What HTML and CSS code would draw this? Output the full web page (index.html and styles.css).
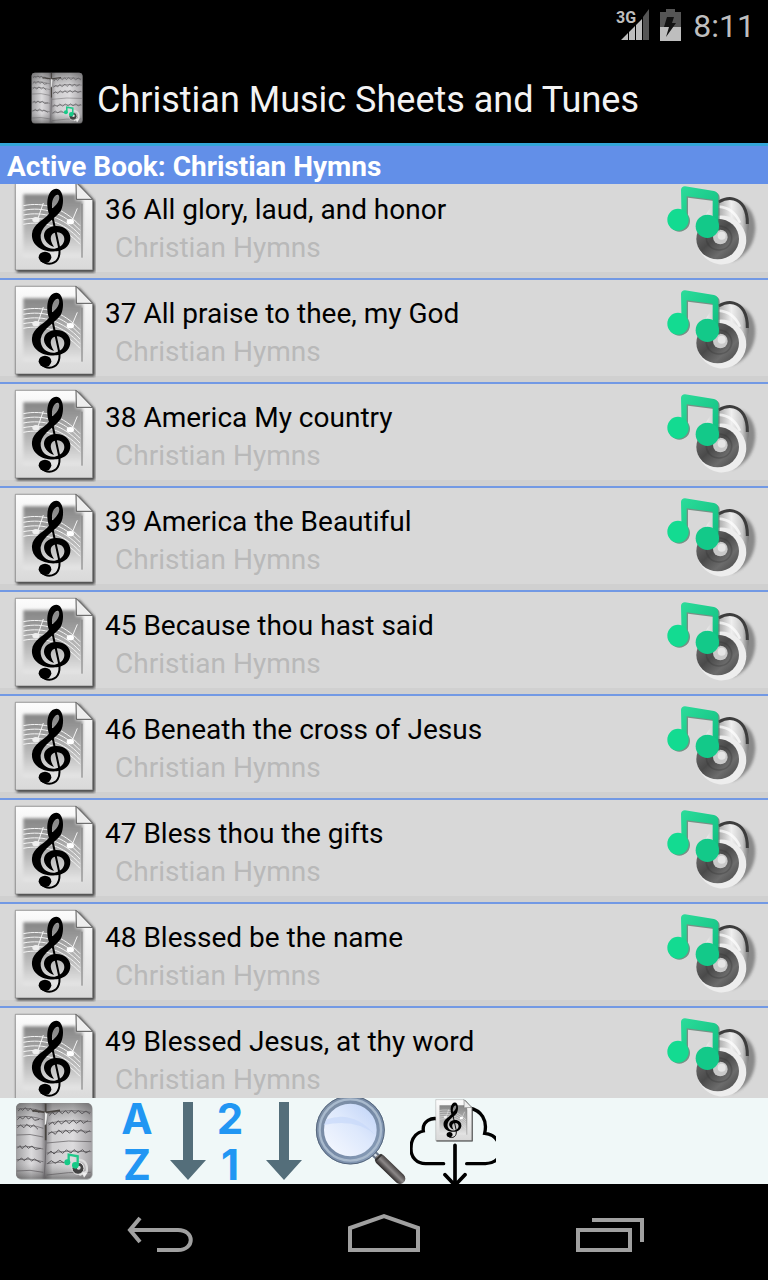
FILE: index.html
```
<!DOCTYPE html>
<html lang="en">
<head>
<meta charset="utf-8">
<meta name="viewport" content="width=device-width, initial-scale=1">
<title>Christian Music Sheets and Tunes</title>
<link rel="stylesheet" href="styles.css">
</head>
<body>
<svg class="defs" aria-hidden="true">
  <defs>
    <linearGradient id="paper" x1="0" y1="0" x2="0" y2="1"><stop offset="0" stop-color="#fcfcfc"/><stop offset="1" stop-color="#d9d9d9"/></linearGradient>
    <linearGradient id="shade" x1="0" y1="0" x2="0" y2="1"><stop offset="0" stop-color="#858585"/><stop offset=".6" stop-color="#b9b9b9"/><stop offset="1" stop-color="#e6e6e6"/></linearGradient>
    <linearGradient id="green" x1="0" y1="0" x2="1" y2="1"><stop offset="0" stop-color="#2bdc9a"/><stop offset="1" stop-color="#10bd80"/></linearGradient>
    <linearGradient id="cabinet" x1="0" y1="0" x2="1" y2="0"><stop offset="0" stop-color="#eee"/><stop offset=".35" stop-color="#b4b4b4"/><stop offset=".6" stop-color="#efefef"/><stop offset=".85" stop-color="#c9c9c9"/><stop offset="1" stop-color="#777"/></linearGradient>
    <linearGradient id="cone" x1="0" y1="0" x2="1" y2="1"><stop offset="0" stop-color="#777"/><stop offset=".45" stop-color="#4a4a4a"/><stop offset=".7" stop-color="#6c6c6c"/><stop offset="1" stop-color="#444"/></linearGradient>
    <linearGradient id="pages" x1="0" y1="0" x2="1" y2="0"><stop offset="0" stop-color="#a09fa1"/><stop offset=".2" stop-color="#dcdbdd"/><stop offset=".33" stop-color="#bab8bb"/><stop offset=".38" stop-color="#8a888b"/><stop offset=".48" stop-color="#cecdcf"/><stop offset=".75" stop-color="#dddcde"/><stop offset="1" stop-color="#a5a3a6"/></linearGradient>
    <linearGradient id="vignette" x1="0" y1="0" x2="0" y2="1"><stop offset="0" stop-color="#333" stop-opacity=".45"/><stop offset=".3" stop-color="#777" stop-opacity="0"/><stop offset=".8" stop-color="#777" stop-opacity="0"/><stop offset="1" stop-color="#333" stop-opacity=".5"/></linearGradient>
    <linearGradient id="lens" x1="1" y1="0" x2="0" y2="1"><stop offset="0" stop-color="#b9cef6"/><stop offset=".45" stop-color="#dde8fc"/><stop offset="1" stop-color="#fbfcff"/></linearGradient>
    <linearGradient id="rim" x1="0" y1="0" x2="1" y2="1"><stop offset="0" stop-color="#8293a8"/><stop offset=".5" stop-color="#7488a4"/><stop offset="1" stop-color="#8ba0bb"/></linearGradient>
    <linearGradient id="handle" gradientUnits="userSpaceOnUse" x1="580" y1="222" x2="556" y2="246"><stop offset="0" stop-color="#3c3838"/><stop offset=".5" stop-color="#8c8888"/><stop offset="1" stop-color="#2c2828"/></linearGradient>
    <filter id="soft" x="-20%" y="-20%" width="140%" height="140%"><feGaussianBlur stdDeviation="4"/></filter>
  </defs>
  <symbol id="sheet" viewBox="39 33 249 288">
    <path d="M50 52H238L284 102V316H50z" fill="#333" filter="url(#soft)"/>
    <path d="M46 46H228L278 97V309H46z" fill="url(#paper)" stroke="#777" stroke-width="2"/>
    <path d="M70 82H228V100H248V270H70z" fill="url(#shade)" filter="url(#soft)"/>
    <g fill="none" stroke="#f4f4f4" stroke-width="3">
      <path d="M70 116C130 104 190 122 240 176"/><path d="M70 130C130 118 190 136 240 190"/><path d="M70 144C130 132 190 150 240 204"/><path d="M70 158C130 146 190 164 240 218"/><path d="M70 172C130 160 190 178 240 232"/>
      <path d="M114 154L130 108M216 162L232 124"/>
    </g>
    <ellipse cx="108" cy="158" rx="11" ry="8" fill="#eee"/><ellipse cx="211" cy="164" rx="11" ry="8" fill="#fff"/>
    <path d="M246 110V272" stroke="#777" stroke-width="3"/>
    <path d="M228 46L229 97H278z" fill="#eee" stroke="#555" stroke-width="3"/>
    <path fill-rule="evenodd" d="M147 140C136 108 143 66 169 65C192 66 194 112 182 132C164 158 128 170 122 204C120 232 142 247 164 245C202 239 201 197 172 196C150 197 146 216 162 240C121 225 122 180 167 177C223 175 228 246 170 253C123 257 93 232 96 200C98 172 130 160 147 140ZM157 124C152 101 164 82 174 83C182 88 178 108 157 124Z"/>
    <path d="M153 130L177 240C183 272 170 289 148 290Q134 290 124 280" fill="none" stroke="#000" stroke-width="6"/>
    <ellipse cx="135" cy="271" rx="19" ry="17"/>
  </symbol>
  <symbol id="tune" viewBox="48 51 276 249">
    <path d="M240 110C290 95 325 150 314 205C308 245 280 276 245 286z" fill="#555" opacity=".6" filter="url(#soft)"/>
    <path d="M166 150C190 95 258 80 284 120C300 150 298 180 291 210L268 272L170 190z" fill="url(#cabinet)"/>
    <path d="M206 108C240 88 268 100 281 122Q293 143 292 174" fill="none" stroke="#3d3d3d" stroke-width="9"/>
    <path d="M206 122Q250 125 270 170" fill="none" stroke="#fff" stroke-width="8" opacity=".7"/>
    <ellipse cx="215" cy="222" rx="74" ry="73" fill="#ededed" transform="rotate(30 215 222)"/>
    <ellipse cx="203" cy="219" rx="64" ry="61" fill="url(#cone)"/>
    <ellipse cx="207" cy="216" rx="38" ry="36" fill="none" stroke="#333" stroke-width="5" opacity=".3"/>
    <circle cx="211" cy="213" r="22" fill="#c9c9c9"/><circle cx="215" cy="209" r="12" fill="#e5e5e5"/>
    <g transform="translate(4 4)" fill="#416c5a" opacity=".65"><path d="M93 72Q94 61 105 61L192 75Q205 78 205 92V190H188V101L110 91V166H95z"/><ellipse cx="84" cy="161" rx="32" ry="32"/></g>
    <path d="M93 72Q94 61 105 61L192 75Q205 78 205 92V190H188V101L110 91V166H95z" fill="url(#green)"/>
    <ellipse cx="84" cy="161" rx="32" ry="33" fill="#13db91"/><ellipse cx="172" cy="181" rx="35" ry="35" fill="#13c989"/>
  </symbol>
  <symbol id="book" viewBox="45 39 234 234">
    <rect x="48" y="43" width="230" height="229" rx="16" fill="#777" opacity=".6"/>
    <rect x="48" y="42" width="228" height="227" rx="15" fill="url(#pages)"/>
    <rect x="48" y="42" width="228" height="227" rx="15" fill="url(#vignette)"/>
    <g fill="none" stroke="#5a585b" stroke-width="2">
      <path d="M52 60Q90 54 130 68M52 84Q90 78 130 92M50 110Q90 104 130 118M50 138Q90 132 130 144M50 174Q90 168 130 180M50 212Q90 206 130 218M50 246Q90 240 130 250"/>
      <path d="M144 74Q205 58 272 70M144 103Q205 90 274 98M144 132Q205 120 274 128M140 162Q205 152 274 158M140 192Q205 183 274 188M140 224Q170 218 200 220M140 258Q205 248 272 250"/>
    </g>
    <path d="M54 66L62 59L68 64L76 56L84 65L91 58L100 68L107 61L118 72M52 92L60 84L68 90L77 81L85 90L95 84L104 94L118 91M52 116L61 108L72 116L80 106L92 115L101 108L114 121M52 178L60 170L66 179L77 169L85 178L96 171L107 181L122 178M52 216L65 207L72 215L84 206L95 216L103 210L122 221M148 80L156 70L165 77L176 66L187 74L196 65L205 73L214 64L225 73L235 65L246 74L258 66L270 75M146 108L158 99L164 107L175 95L184 105L198 94L207 104L220 93L229 103L242 94L250 103L264 95M144 137L155 128L166 136L176 123L188 133L197 123L208 132L221 122L232 131L243 122L256 132L270 125M142 196L153 186L162 195L175 183L188 193L199 183L213 192L222 182L234 191L248 182L257 192L270 185M142 224L154 215L166 223L180 214L192 222" fill="none" stroke="#59575a" stroke-width="3"/>
    <path d="M136 70Q142 160 132 268" fill="none" stroke="#6b686c" stroke-width="3"/>
    <path d="M97 65L137 70L180 64M137 44V154" fill="none" stroke="#47433f" stroke-width="5"/>
    <path d="M134 68L143 75L139 105L133 110z" fill="#eee" stroke="#555"/>
    <path d="M228 212Q265 210 260 248L238 258" fill="none" stroke="#ddd" stroke-width="7"/>
    <circle cx="234" cy="238" r="18" fill="#424242" stroke="#eee" stroke-width="3"/><circle cx="236" cy="236" r="6" fill="#ddd"/>
    <path d="M206 218V197L233 202V230" fill="none" stroke="#20c98a" stroke-width="7"/><circle cx="202" cy="220" r="9" fill="#17c987"/><circle cx="226" cy="229" r="10" fill="#17c987"/>
    <path d="M246 250L262 252L252 266z" fill="#eee"/>
  </symbol>
  <symbol id="down" viewBox="0 0 36 78"><path d="M13 0H23V58H36L18 78L0 58H13z" fill="#546e7a"/></symbol>
</svg>

<div class="screen">
  <div class="status">
    <svg class="signal" viewBox="0 0 34 34" role="img" aria-label="3G signal">
      <text x="0" y="15" class="network">3G</text>
      <path d="M5 32L12 25V32zM13 24L19 18V32H13zM20 17L26 11V32H20z" fill="#bebebe"/><path d="M27 9L33 1V32H27z" fill="#555"/>
    </svg>
    <svg class="battery" viewBox="0 0 21 32" role="img" aria-label="Battery charging">
      <path d="M6 0H15V3H21V18H0V3H6z" fill="#555"/><path d="M0 18H21V32H0z" fill="#bebebe"/><path d="M7 8H14L12 14H16L6 28L9 18H4z" fill="#111"/>
    </svg>
    <time class="clock">8:11</time>
  </div>
  <header class="titlebar">
    <svg class="logo" aria-hidden="true"><use href="#book"/></svg>
    <h1 class="title">Christian Music Sheets and Tunes</h1>
  </header>
  <h2 class="active-book">Active Book: Christian Hymns</h2>
  <main class="list-view">
    <ul class="songs">
      <li class="song"><svg class="sheet" aria-hidden="true"><use href="#sheet"/></svg><div class="info"><p class="name">36 All glory, laud, and honor</p><p class="source">Christian Hymns</p></div><button class="play" aria-label="Play 36"><svg class="tune"><use href="#tune"/></svg></button></li>
      <li class="song"><svg class="sheet" aria-hidden="true"><use href="#sheet"/></svg><div class="info"><p class="name">37 All praise to thee, my God</p><p class="source">Christian Hymns</p></div><button class="play" aria-label="Play 37"><svg class="tune"><use href="#tune"/></svg></button></li>
      <li class="song"><svg class="sheet" aria-hidden="true"><use href="#sheet"/></svg><div class="info"><p class="name">38 America My country</p><p class="source">Christian Hymns</p></div><button class="play" aria-label="Play 38"><svg class="tune"><use href="#tune"/></svg></button></li>
      <li class="song"><svg class="sheet" aria-hidden="true"><use href="#sheet"/></svg><div class="info"><p class="name">39 America the Beautiful</p><p class="source">Christian Hymns</p></div><button class="play" aria-label="Play 39"><svg class="tune"><use href="#tune"/></svg></button></li>
      <li class="song"><svg class="sheet" aria-hidden="true"><use href="#sheet"/></svg><div class="info"><p class="name">45 Because thou hast said</p><p class="source">Christian Hymns</p></div><button class="play" aria-label="Play 45"><svg class="tune"><use href="#tune"/></svg></button></li>
      <li class="song"><svg class="sheet" aria-hidden="true"><use href="#sheet"/></svg><div class="info"><p class="name">46 Beneath the cross of Jesus</p><p class="source">Christian Hymns</p></div><button class="play" aria-label="Play 46"><svg class="tune"><use href="#tune"/></svg></button></li>
      <li class="song"><svg class="sheet" aria-hidden="true"><use href="#sheet"/></svg><div class="info"><p class="name">47 Bless thou the gifts</p><p class="source">Christian Hymns</p></div><button class="play" aria-label="Play 47"><svg class="tune"><use href="#tune"/></svg></button></li>
      <li class="song"><svg class="sheet" aria-hidden="true"><use href="#sheet"/></svg><div class="info"><p class="name">48 Blessed be the name</p><p class="source">Christian Hymns</p></div><button class="play" aria-label="Play 48"><svg class="tune"><use href="#tune"/></svg></button></li>
      <li class="song"><svg class="sheet" aria-hidden="true"><use href="#sheet"/></svg><div class="info"><p class="name">49 Blessed Jesus, at thy word</p><p class="source">Christian Hymns</p></div><button class="play" aria-label="Play 49"><svg class="tune"><use href="#tune"/></svg></button></li>
    </ul>
  </main>
  <div class="toolbar">
    <button class="tool tool-book" aria-label="Books"><svg class="book"><use href="#book"/></svg></button>
    <button class="tool tool-sort" aria-label="Sort by title"><span class="letters"><span>A</span><span>Z</span></span><svg class="arrow"><use href="#down"/></svg></button>
    <button class="tool tool-sort" aria-label="Sort by number"><span class="letters digits"><span>2</span><span>1</span></span><svg class="arrow"><use href="#down"/></svg></button>
    <button class="tool tool-search" aria-label="Search">
      <svg class="lens" viewBox="336 24 282 258">
        <path d="M512 182L540 208" stroke="#68778a" stroke-width="20"/><path d="M514 184L538 206" stroke="#d8e0e8" stroke-width="7"/>
        <path d="M541 209L600 266" stroke="url(#handle)" stroke-width="32" stroke-linecap="round"/>
        <path d="M526 212L545 193" stroke="#333" stroke-width="6"/>
        <circle cx="451" cy="120" r="91" fill="url(#lens)" stroke="url(#rim)" stroke-width="24"/>
        <circle cx="451" cy="120" r="92" fill="none" stroke="#a9bacd" stroke-width="7"/>
        <circle cx="451" cy="120" r="102" fill="none" stroke="#56677d" stroke-width="3"/>
        <path d="M380 88Q460 60 526 135Q470 85 371 105z" fill="#c7d8fa" opacity=".7"/>
      </svg>
    </button>
    <button class="tool tool-download" aria-label="Download">
      <svg class="cloud" viewBox="630 24 258 258">
        <path d="M731 221H677C650 221 633 202 633 176C633 146 646 129 670 123C666 94 695 79 720 89M807 54C845 61 863 91 854 130C875 132 888 143 894 156M800 221H856Q880 220 894 205" fill="none" stroke="#000" stroke-width="10" stroke-linecap="round"/>
        <path d="M765 166V282M735 254L765 286L795 254" fill="none" stroke="#000" stroke-width="11" stroke-linecap="round"/>
        <use href="#sheet" x="704" y="22" width="116" height="136"/>
      </svg>
    </button>
  </div>
  <nav class="navbar">
    <button class="nav" aria-label="Back"><svg class="nav-icon" viewBox="0 0 72 40"><path d="M8 18H56C73 18 73 38 56 38H35M18 6L8 18L18 30" fill="none" stroke="#a0a0a0" stroke-width="4"/></svg></button>
    <button class="nav" aria-label="Home"><svg class="nav-icon" viewBox="0 0 72 40"><path d="M2 38V16L36 4L70 16V38z" fill="none" stroke="#a0a0a0" stroke-width="4"/></svg></button>
    <button class="nav" aria-label="Recent apps"><svg class="nav-icon" viewBox="0 0 72 40"><path d="M4 18H56V38H4zM18 8H68V30" fill="none" stroke="#a0a0a0" stroke-width="4"/></svg></button>
  </nav>
</div>
</body>
</html>
```
FILE: styles.css
```
* { box-sizing: border-box; }
body { margin: 0; background: #000; font-family: Roboto, "Noto Sans", sans-serif; }
button { border: 0; padding: 0; background: none; font: inherit; cursor: pointer; }
h1, h2, p, ul { margin: 0; padding: 0; }
svg { display: block; flex: none; }
.defs { position: absolute; width: 0; height: 0; }
.screen { display: flex; flex-direction: column; height: 100vh; overflow: hidden; }

.status { display: flex; align-items: center; justify-content: flex-end; gap: 10px; height: 50px; padding: 0 13px; flex: none; }
.signal { width: 34px; height: 34px; }
.network { font: bold 16px Roboto, sans-serif; fill: #bebebe; }
.battery { width: 21px; height: 32px; }
.clock { margin-left: 2px; padding-top: 2px; font-size: 32px; line-height: 40px; color: #bebebe; }

.titlebar { display: flex; align-items: center; gap: 14px; height: 93px; padding: 2px 31px 0; flex: none; }
.logo { width: 52px; height: 52px; }
.title { padding-top: 4px; font-size: 36px; font-weight: 400; line-height: 48px; color: #f3f3f3; white-space: nowrap; }

.active-book { flex: none; padding: 4px 7px 1px; border-top: 3px solid #33a5d8; background: #628fe8; color: #fff; font-size: 28px; font-weight: 700; line-height: 33px; }

.list-view { flex: 1; min-height: 0; overflow: hidden; background: #d8d8d8; }
.songs { margin-top: -8px; list-style: none; }
.song { display: flex; align-items: flex-start; height: 104px; padding: 0 10px 0 13px; border-bottom: 2px solid #7299e4; background: linear-gradient(to top, #d0d0d0 6px, #d8d8d8 6px); }
.sheet { width: 83px; height: 96px; margin-top: 2px; }
.info { flex: 1; min-width: 0; padding: 15px 0 0 9px; }
.name { font-size: 28px; line-height: 38px; color: #000; white-space: nowrap; }
.source { padding-left: 10px; font-size: 28px; line-height: 38px; color: #b9b9b9; }
.play { padding-top: 7px; }
.tune { width: 92px; height: 83px; }

.toolbar { display: flex; gap: 10px; flex: none; height: 86px; padding-left: 12px; background: #f0f8f8; }
.tool { flex: none; height: 86px; }
.tool-book { width: 98px; padding-left: 3px; }
.book { width: 78px; height: 78px; }
.tool-sort { display: flex; justify-content: space-between; align-items: center; width: 86px; }
.letters { display: flex; flex-direction: column; width: 34px; align-items: center; padding-top: 2px; font-family: Inter, sans-serif; font-size: 42px; font-weight: 700; line-height: 46px; color: #2196f3; }
.digits { width: 28px; }
.arrow { width: 36px; height: 78px; }
.tool-search { width: 88px; }
.lens { width: 94px; height: 86px; }
.tool-download { width: 86px; }
.cloud { width: 86px; height: 86px; }

.navbar { display: flex; justify-content: center; gap: 40px; flex: none; height: 96px; }
.nav { width: 186px; display: flex; align-items: center; justify-content: center; }
.nav-icon { width: 72px; height: 40px; }
```
